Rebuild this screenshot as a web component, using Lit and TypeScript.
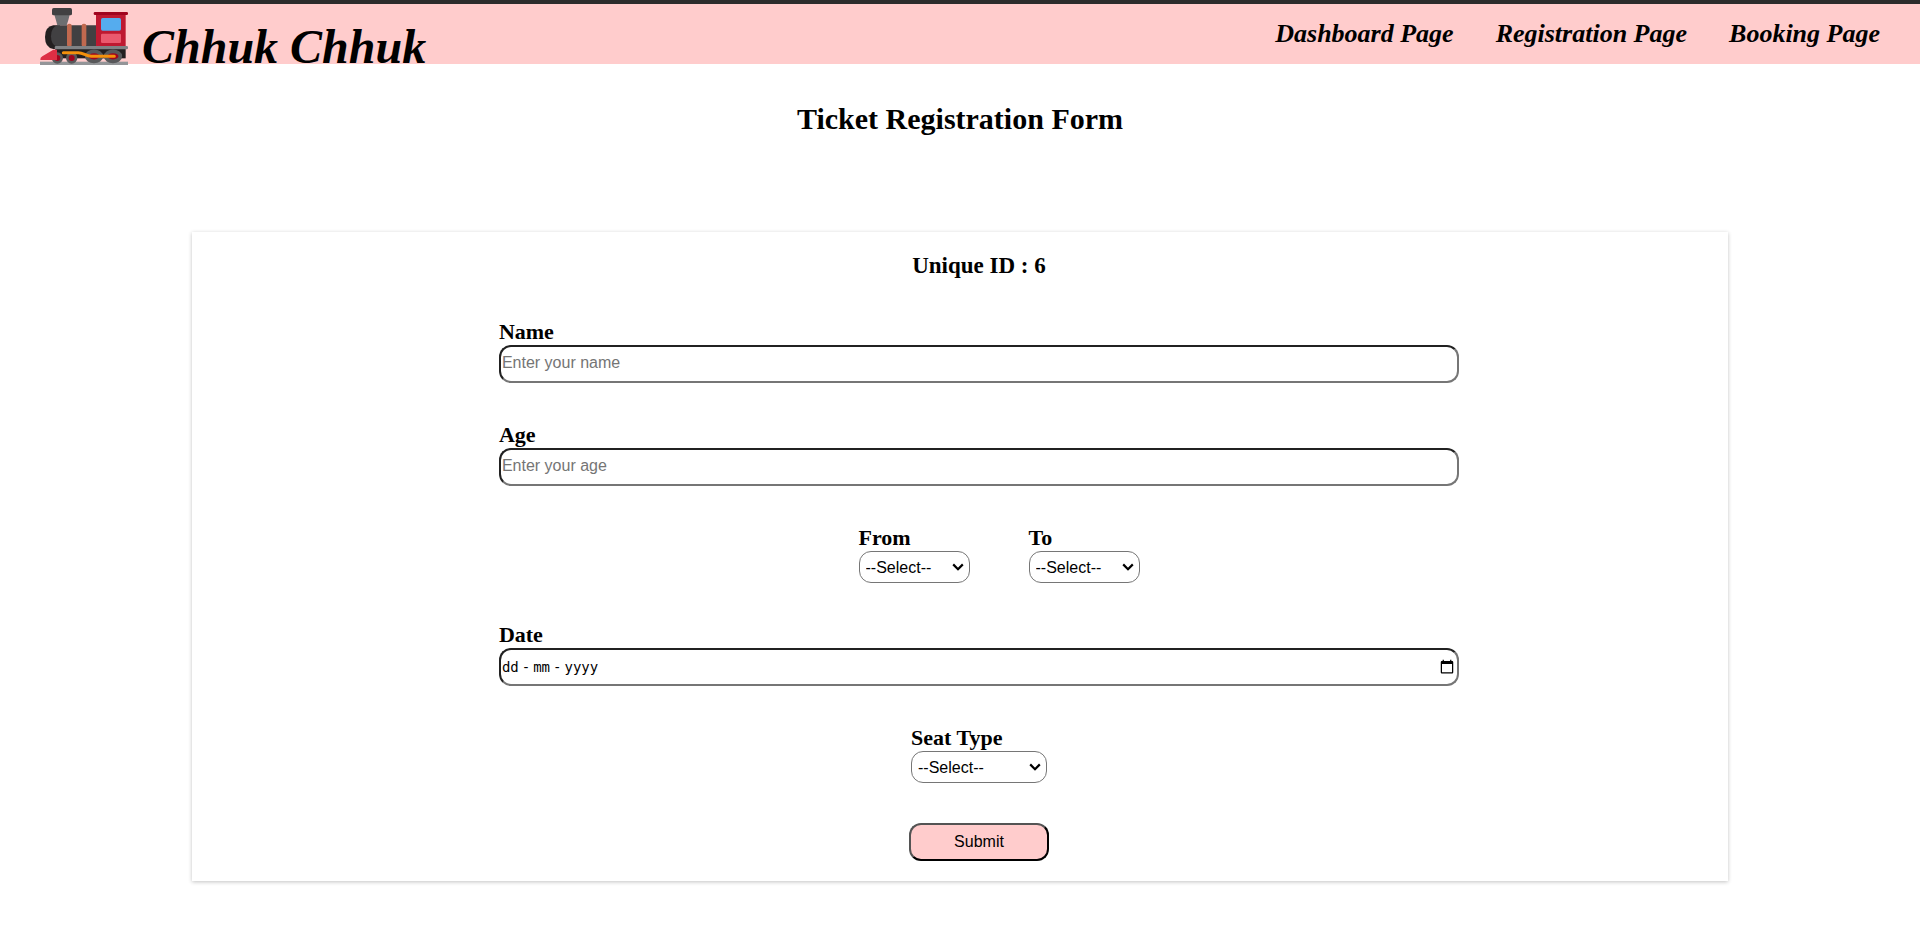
import { LitElement, html, css } from "lit";
import { customElement, state } from "lit/decorators.js";

const STATIONS = ["Mumbai", "Delhi", "Pune", "Chennai"];
const SEATS = ["AC First Class", "Sleeper", "Chair Car"];

@customElement("app-header")
class AppHeader extends LitElement {
  static styles = css`
    :host {
      display: block;
      border-top: 4px solid #2b2b2b;
      background: #ffcccc;
    }
    .bar {
      display: flex;
      justify-content: space-between;
      box-sizing: border-box;
      height: 60px;
      padding: 0 40px;
    }
    .brand {
      display: flex;
      align-items: flex-end;
      gap: 14px;
    }
    .logo {
      display: block;
      width: 88px;
      height: 57px;
      margin-bottom: -1px;
    }
    .name {
      margin: 0;
      font-size: 48px;
      line-height: 34px;
      font-style: italic;
      white-space: nowrap;
    }
    .links {
      display: flex;
      align-items: center;
      gap: 42px;
    }
    .link {
      color: #000;
      font-size: 26px;
      line-height: 30px;
      font-weight: bold;
      font-style: italic;
      text-decoration: none;
      white-space: nowrap;
    }
  `;

  render() {
    return html`
      <header class="bar">
        <div class="brand">
          <svg class="logo" viewBox="30 24 264 171" preserveAspectRatio="none" aria-hidden="true">
            <rect x="30" y="185" width="264" height="10" fill="#939598" />
            <rect x="76" y="146" width="211" height="29" fill="#231f20" />
            <path d="M70 76 Q45 80 45 111 Q45 143 70 147 H90 V76Z" fill="#231f20" />
            <path d="M82 76 H200 V140 H80 Q63 134 63 109 Q63 83 82 76Z" fill="#414042" />
            <path d="M73 44 H119 Q115 62 110 76 H82 Q78 60 73 44Z" fill="#6d6e71" />
            <rect x="66" y="24" width="60" height="22" rx="5" fill="#414042" />
            <rect x="111" y="71" width="14" height="70" rx="6" fill="#c1694f" />
            <rect x="155" y="71" width="14" height="70" rx="6" fill="#c1694f" />
            <rect x="198" y="42" width="89" height="97" fill="#be1931" />
            <rect x="191" y="36" width="103" height="9" rx="4" fill="#a0041e" />
            <rect x="213" y="54" width="60" height="38" rx="5" fill="#55acee" />
            <rect x="213" y="101" width="60" height="28" rx="4" fill="#ea596e" />
            <rect x="74" y="138" width="220" height="10" rx="4" fill="#808285" />
            <g fill="#a0041e" stroke="#58595b">
              <circle cx="82" cy="174" r="13" stroke-width="8" />
              <circle cx="125" cy="174" r="13" stroke-width="8" />
              <ellipse cx="192" cy="169" rx="22" ry="15" stroke-width="11" />
              <ellipse cx="249" cy="169" rx="22" ry="15" stroke-width="11" />
            </g>
            <path d="M70 149 H81 V180 H31 Q30 173 37 169Z" fill="#dd2e44" />
            <path d="M100 158 H145 C160 158 168 169 184 169 H253" fill="none" stroke="#f4900c" stroke-width="9" stroke-linecap="round" />
          </svg>
          <h1 class="name">Chhuk Chhuk</h1>
        </div>
        <nav class="links">
          <a class="link" href="#dashboard">Dashboard Page</a>
          <a class="link" href="#registration">Registration Page</a>
          <a class="link" href="#booking">Booking Page</a>
        </nav>
      </header>
    `;
  }
}

@customElement("ticket-form")
class TicketForm extends LitElement {
  @state() private date = "";

  static styles = css`
    :host {
      display: block;
    }
    .card {
      display: flex;
      flex-direction: column;
      align-items: center;
      gap: 40px;
      box-sizing: border-box;
      width: 80%;
      margin: 0 auto;
      padding: 20px 0 20px 38px;
      background: #fff;
      box-shadow: 0 1px 4px rgba(0, 0, 0, 0.24);
    }
    .uid {
      margin: 0;
      font-size: 23px;
      line-height: 28px;
    }
    .field {
      display: flex;
      flex-direction: column;
    }
    .wide {
      width: 64.1%;
    }
    .pair {
      display: flex;
      gap: 19px;
    }
    .pair .field {
      padding-left: 40px;
    }
    .label {
      padding-bottom: 1px;
      font-size: 22px;
      line-height: 24px;
      font-weight: bold;
    }
    .input,
    .select,
    .submit {
      box-sizing: border-box;
      margin: 0;
      border-radius: 12px;
      font: 16px "Liberation Sans", Arial, sans-serif;
      color: #000;
    }
    .input {
      display: block;
      width: 100%;
      height: 38px;
      padding: 1px 0;
      border: 2px inset #767676;
      background: #fff;
    }
    .text {
      padding: 1px 1px 3px;
    }
    .input::placeholder {
      color: #757575;
    }
    .select {
      width: 111px;
      height: 32px;
      padding: 0 24px 0 6px;
      border: 1px solid #767676;
      appearance: none;
      background: #fff
        url("data:image/svg+xml,%3Csvg xmlns='http://www.w3.org/2000/svg' width='12' height='8'%3E%3Cpath d='M1.2 1.4L6 6.2l4.8-4.8' fill='none' stroke='%23000' stroke-width='2.2'/%3E%3C/svg%3E")
        no-repeat right 5px center;
    }
    .seat {
      width: 136px;
    }
    .date {
      position: relative;
    }
    .empty::-webkit-datetime-edit {
      opacity: 0;
    }
    .hint {
      position: absolute;
      inset: 0 auto 0 3px;
      display: flex;
      align-items: center;
      gap: 3px;
      pointer-events: none;
      font: 14px "DejaVu Sans Mono", monospace;
    }
    .submit {
      width: 140px;
      height: 38px;
      border: 2px outset #000;
      background: #ffcccc;
    }
  `;

  private options(items: string[]) {
    return html`<option value="">--Select--</option>${items.map((i) => html`<option>${i}</option>`)}`;
  }

  render() {
    return html`
      <form class="card" @submit=${(e: Event) => e.preventDefault()}>
        <h3 class="uid">Unique ID : 6</h3>
        <div class="field wide">
          <label class="label" for="name">Name</label>
          <input class="input text" id="name" type="text" placeholder="Enter your name" />
        </div>
        <div class="field wide">
          <label class="label" for="age">Age</label>
          <input class="input text" id="age" type="number" placeholder="Enter your age" />
        </div>
        <div class="pair">
          <div class="field">
            <label class="label" for="from">From</label>
            <select class="select" id="from">${this.options(STATIONS)}</select>
          </div>
          <div class="field">
            <label class="label" for="to">To</label>
            <select class="select" id="to">${this.options(STATIONS)}</select>
          </div>
        </div>
        <div class="field wide">
          <label class="label" for="date">Date</label>
          <div class="date">
            <input
              class="input ${this.date ? "" : "empty"}"
              id="date"
              type="date"
              @input=${(e: Event) => (this.date = (e.target as HTMLInputElement).value)}
            />
            ${this.date
              ? ""
              : html`<div class="hint"><span>dd</span><span>-</span><span>mm</span><span>-</span><span>yyyy</span></div>`}
          </div>
        </div>
        <div class="field">
          <label class="label" for="seat">Seat Type</label>
          <select class="select seat" id="seat">${this.options(SEATS)}</select>
        </div>
        <button class="submit" type="submit">Submit</button>
      </form>
    `;
  }
}

@customElement("app-root")
class AppRoot extends LitElement {
  static styles = css`
    :host {
      display: block;
      min-height: 100vh;
      background: #fff;
      color: #000;
      font-family: "Liberation Serif", "Times New Roman", serif;
    }
    .title {
      margin: 0;
      padding: 38px 0 96px;
      font-size: 30px;
      line-height: 34px;
      text-align: center;
    }
  `;

  render() {
    return html`
      <app-header></app-header>
      <main>
        <h2 class="title">Ticket Registration Form</h2>
        <ticket-form></ticket-form>
      </main>
    `;
  }
}
